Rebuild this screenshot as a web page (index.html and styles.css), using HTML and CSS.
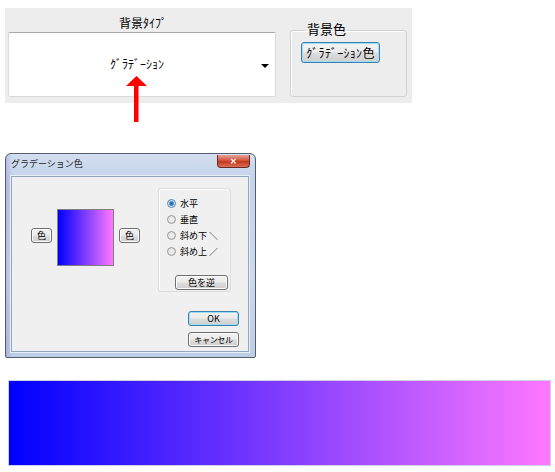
FILE: index.html
```html
<!DOCTYPE html>
<html lang="ja">
<head>
  <meta charset="UTF-8" />
  <title>グラデーション背景</title>
  <link rel="stylesheet" href="styles.css">
</head>
<body>
  <div class="page">

    <!-- 背景設定パネル -->
    <div class="panel">
      <div class="type-col">
        <div class="type-label">背景ﾀｲﾌﾟ</div>
        <div class="type-select">
          <span class="type-value">ｸﾞﾗﾃﾞｰｼｮﾝ</span>
          <span class="type-arrow"></span>
        </div>
      </div>
      <fieldset class="color-group">
        <legend>背景色</legend>
        <button class="win-btn focus grad-btn">ｸﾞﾗﾃﾞｰｼｮﾝ色</button>
      </fieldset>
    </div>

    <svg class="pointer" width="21" height="46" viewBox="0 0 21 46">
      <polygon points="10.5,0 0,10 21,10" fill="#ff0000" />
      <rect x="8" y="10" width="4.5" height="36" fill="#ff0000" />
    </svg>

    <!-- グラデーション色ダイアログ -->
    <div class="dialog">
      <div class="dlg-title">
        <span class="dlg-caption">グラデーション色</span>
        <span class="dlg-close">✕</span>
      </div>
      <div class="dlg-body">
        <div class="swatch-area">
          <button class="win-btn mini">色</button>
          <div class="swatch"></div>
          <button class="win-btn mini">色</button>
        </div>
        <div class="dlg-side">
          <div class="dir-group">
            <label class="radio-row"><span class="radio on"></span>水平</label>
            <label class="radio-row"><span class="radio"></span>垂直</label>
            <label class="radio-row"><span class="radio"></span>斜め下 ＼</label>
            <label class="radio-row"><span class="radio"></span>斜め上 ／</label>
            <button class="win-btn swap-btn">色を逆</button>
          </div>
          <button class="win-btn focus dlg-btn ok-btn">OK</button>
          <button class="win-btn dlg-btn cancel-btn">キャンセル</button>
        </div>
      </div>
    </div>

    <!-- 結果 -->
    <div class="result"></div>

  </div>
</body>
</html>
```

FILE: styles.css
```css
* {
  box-sizing: border-box;
}

body {
  margin: 0;
  background: #fff;
  font-family: "Noto Sans CJK JP", "Noto Sans", sans-serif;
  color: #000;
}

.page {
  position: relative;
  width: 555px;
  height: 472px;
  overflow: hidden;
  padding-top: 8px;
}

/* top panel */
.panel {
  display: flex;
  width: 407px;
  height: 95px;
  margin-left: 5px;
  padding-left: 3px;
  background: #ededed;
}

.type-col {
  width: 268px;
}

.type-label {
  height: 24px;
  font-size: 12px;
  line-height: 16px;
  padding-top: 7px;
  text-align: center;
  padding-left: 2px;
}

.type-select {
  display: flex;
  align-items: center;
  height: 65px;
  background: #fff;
  border: 1px solid #d9d9d9;
  border-top-color: #a8a8a8;
  border-radius: 2px;
  font-size: 12px;
}

.type-value {
  flex: 1;
  text-align: center;
  padding-left: 4px;
  margin-top: -3px;
}

.type-arrow {
  width: 0;
  height: 0;
  margin: 2px 6px 0 0;
  border-left: 4px solid transparent;
  border-right: 4px solid transparent;
  border-top: 4px solid #000;
}

.color-group {
  width: 117px;
  height: 75px;
  margin: 14px 0 0 14px;
  padding: 3px 0 0 10px;
  border: 1px solid #d2d2d2;
  border-radius: 3px;
  box-shadow: inset 1px 1px 0 #fff;
}

.color-group legend {
  margin-left: 5px;
  padding: 0 1px 3px;
  font-size: 13px;
  line-height: 14px;
}

/* windows style buttons */
.win-btn {
  display: flex;
  align-items: center;
  justify-content: center;
  padding: 0;
  font-family: inherit;
  color: #000;
  border: 1px solid #707070;
  border-radius: 3px;
  background: linear-gradient(#f2f2f2 0%, #ebebeb 48%, #dddddd 52%, #cfcfcf 100%);
  box-shadow: inset 0 0 0 1px #fcfcfc;
}

.win-btn.focus {
  border-color: #3c7fb1;
  box-shadow: inset 0 0 0 1px #9fdcf6;
}

.grad-btn {
  width: 79px;
  height: 21px;
  font-size: 12px;
  letter-spacing: 0.3px;
}

.pointer {
  position: absolute;
  left: 126px;
  top: 76px;
}

/* dialog */
.dialog {
  width: 251px;
  margin: 50px 0 0 5px;
  padding: 0 6px 5px 5px;
  border: 1px solid #555d68;
  border-radius: 6px 6px 2px 2px;
  background: linear-gradient(90deg, rgba(120, 90, 210, 0.25) 0, rgba(205, 218, 236, 0) 6px),
              linear-gradient(#d3dff0, #c3d3e9 12%, #ccdaeb 60%, #bccde6);
}

.dlg-title {
  display: flex;
  justify-content: space-between;
  height: 22px;
}

.dlg-caption {
  font-size: 9px;
  line-height: 22px;
  color: #1e1e1e;
  margin-top: -1px;
}

.dlg-close {
  width: 33px;
  height: 13px;
  margin: 1px -1px 0 0;
  border: 1px solid #6d2a22;
  border-top: none;
  border-radius: 0 0 4px 4px;
  background: linear-gradient(#e6a396, #d4553d 45%, #c2381f 55%, #d97058);
  color: #fff;
  font-size: 8px;
  font-weight: bold;
  line-height: 12px;
  text-align: center;
}

.dlg-body {
  display: flex;
  height: 176px;
  background: #f0f0f0;
  border: 1px solid #94a6bd;
  box-shadow: 0 0 0 1px #e8eef6;
  font-size: 9px;
}

.swatch-area {
  display: flex;
  align-items: flex-start;
  gap: 5px;
  width: 146px;
  padding: 32px 0 0 19px;
}

.swatch {
  width: 57px;
  height: 57px;
  border: 1px solid #7f7f7f;
  background: linear-gradient(90deg, #0000ff, #ff78ff);
}

.win-btn.mini {
  width: 21px;
  height: 15px;
  margin-top: 19px;
  font-size: 9px;
}

.dlg-side {
  display: flex;
  flex-direction: column;
  padding-top: 11px;
}

.dir-group {
  width: 73px;
  height: 104px;
  padding: 6px 0 0 8px;
  border: 1px solid #dcdcdc;
  border-radius: 3px;
  box-shadow: inset 1px 1px 0 #fff;
}

.radio-row {
  display: flex;
  align-items: center;
  gap: 4px;
  height: 16px;
}

.radio {
  width: 9px;
  height: 9px;
  border: 1px solid #9a9a9a;
  border-radius: 50%;
  background: radial-gradient(#f0f0f0, #d8d8d8);
}

.radio.on {
  border-color: #5a7fa8;
  background: radial-gradient(circle, #1f5fa6 0, #3b8bd6 2px, #dbe8f5 3px);
}

.swap-btn {
  width: 53px;
  height: 15px;
  margin: 16px 0 0 8px;
  font-size: 9px;
}

.dlg-btn {
  width: 51px;
  height: 15px;
  margin-left: 30px;
  font-size: 9px;
}

.ok-btn {
  margin-top: 19px;
  margin-bottom: 6px;
}

.cancel-btn {
  font-size: 8px;
  letter-spacing: -0.3px;
}

/* result strip */
.result {
  width: 543px;
  height: 86px;
  margin: 22px 0 0 8px;
  border: 1px solid #cfcfe6;
  background: linear-gradient(90deg, #0000ff, #ff78ff);
  background-clip: content-box;
}
```
